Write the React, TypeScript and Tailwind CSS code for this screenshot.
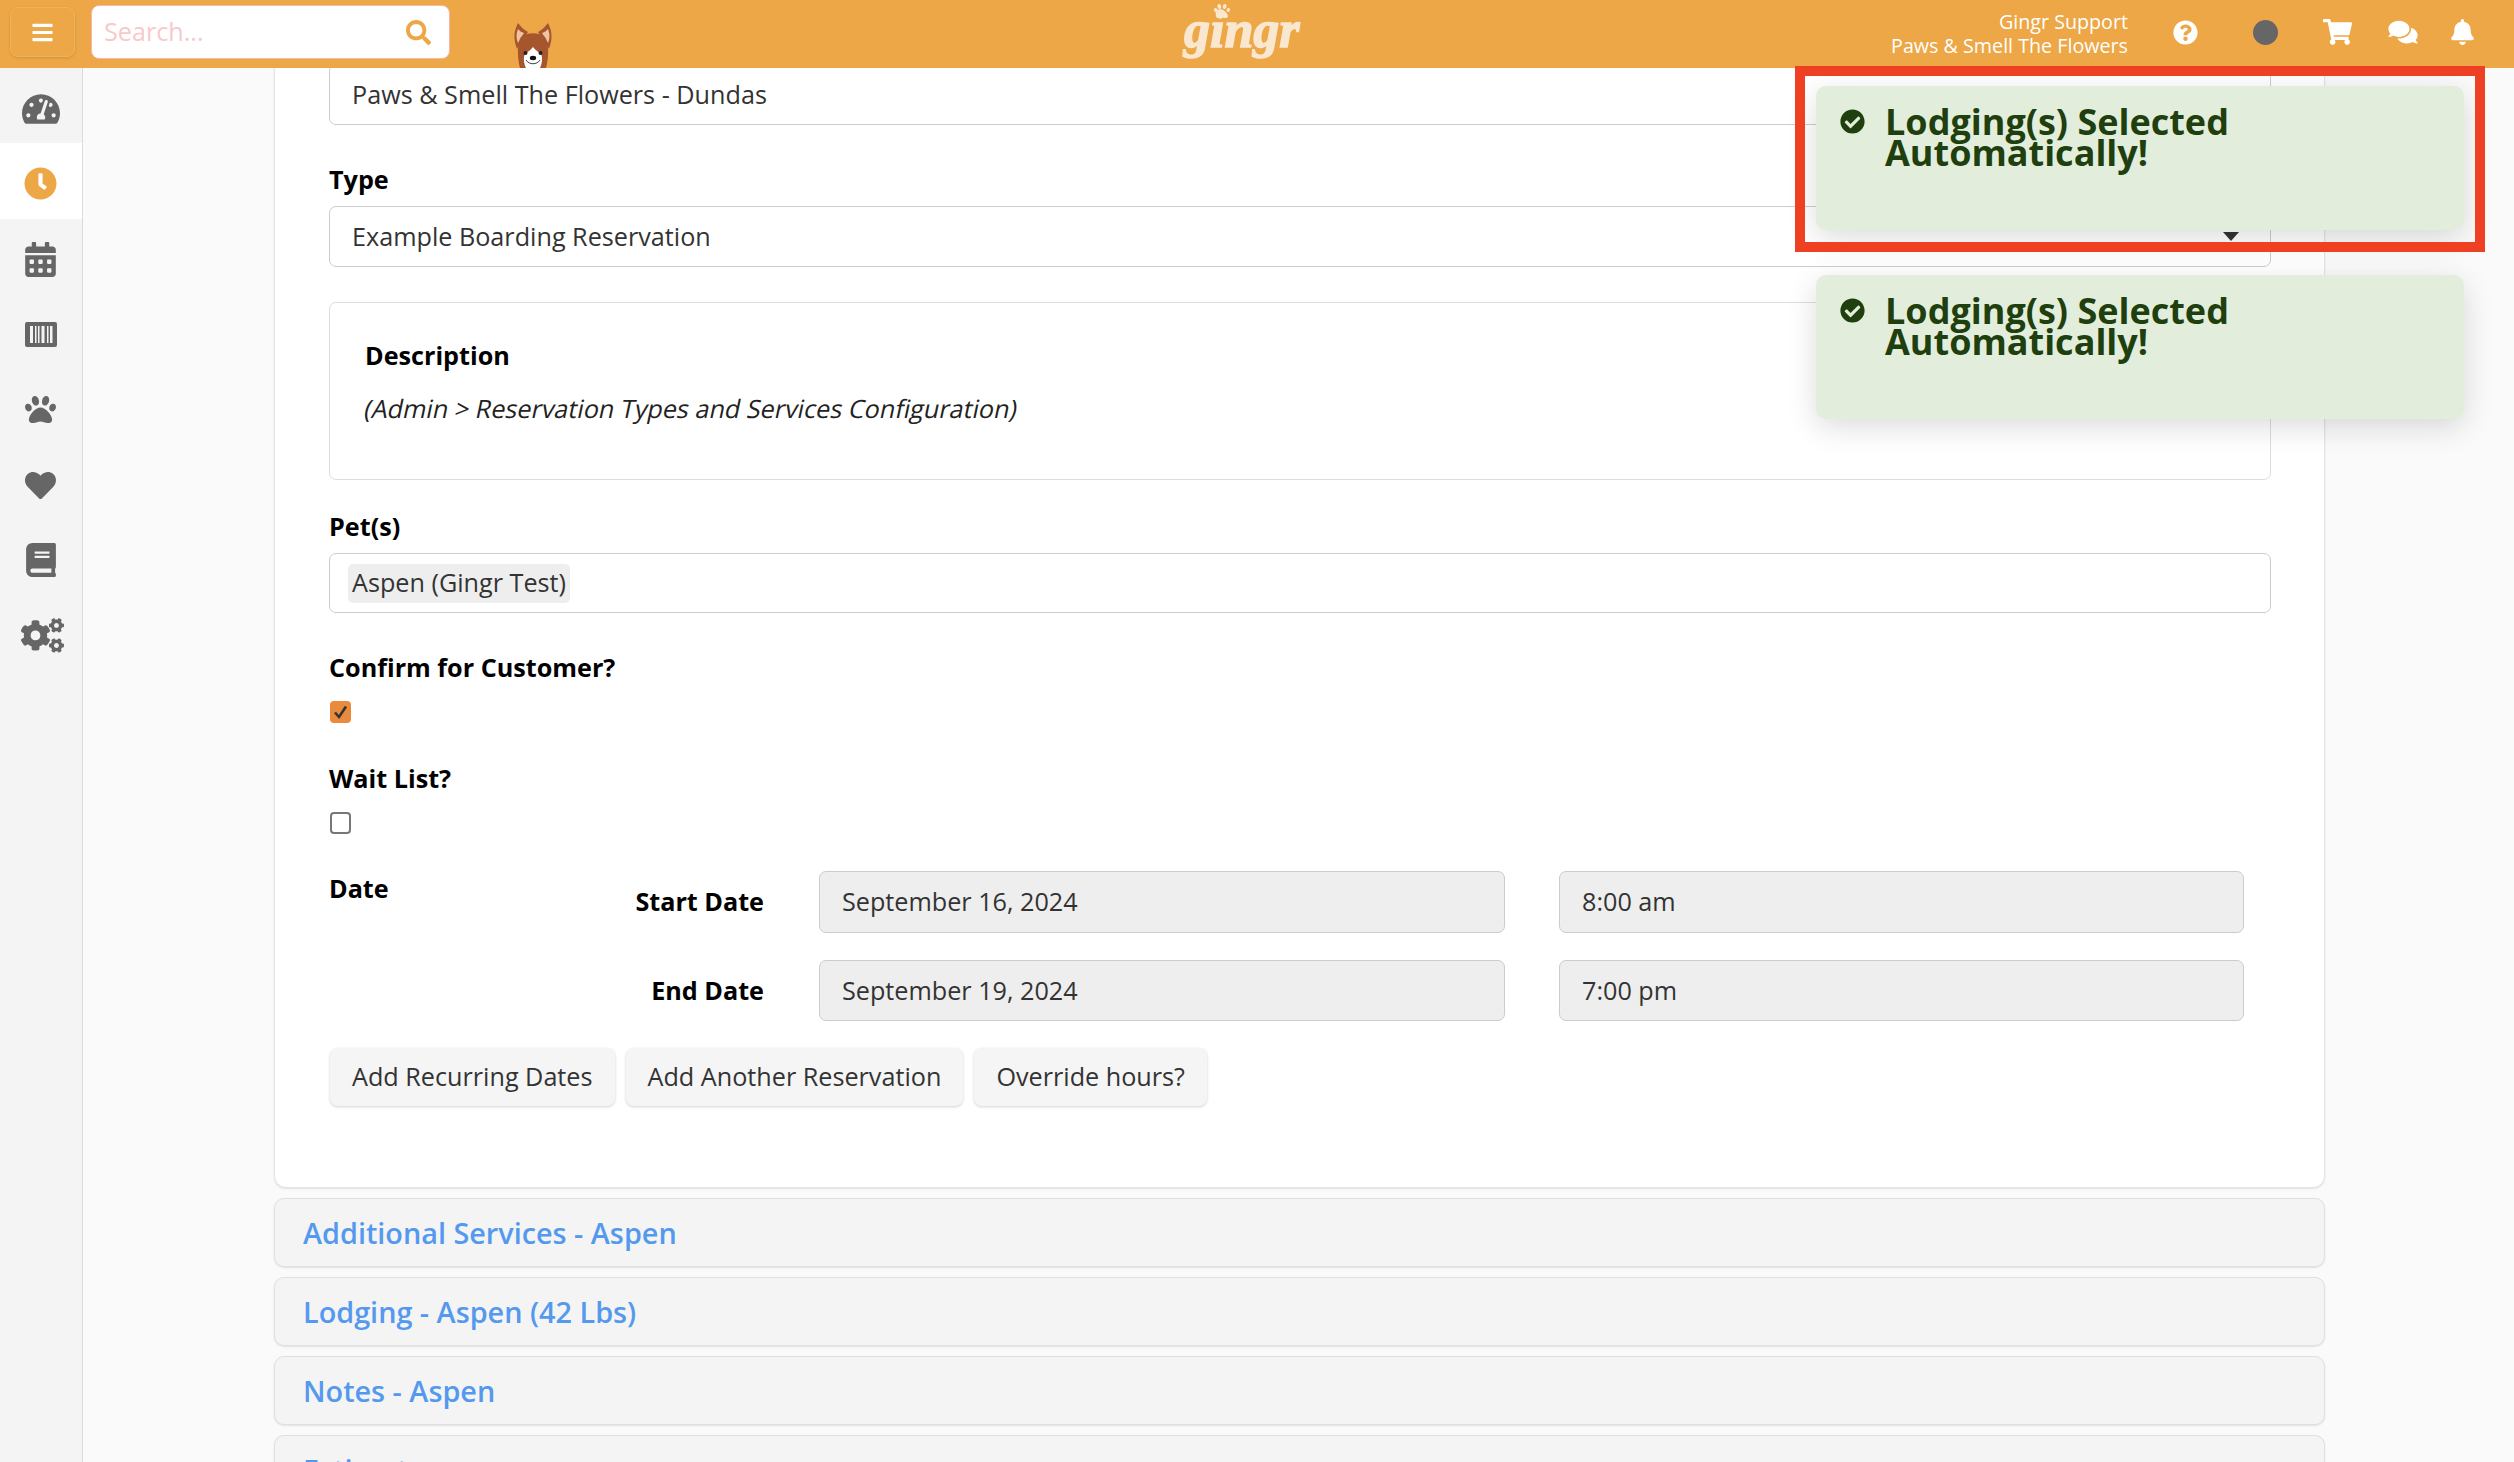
import { FaBars, FaBell, FaBook, FaCalendarAlt, FaCheckCircle, FaClock, FaCogs, FaComments, FaHeart, FaPaw, FaQuestionCircle, FaSearch, FaShoppingCart, FaTachometerAlt } from 'react-icons/fa';

function BarcodeIcon() {
  return (
    <svg viewBox="0 0 32 25" className="w-[32px] h-[25px]">
      <rect width="32" height="25" rx="2" fill="#666" />
      <path d="M5 4h3v17H5zM10 4h1.5v17H10zM13 4h1.5v17H13zM16.5 4h3v17h-3zM22 4h1.5v17H22zM25 4h2.5v17H25z" fill="#f4f4f4" />
    </svg>
  );
}

function DogHead() {
  return (
    <svg viewBox="0 0 40 45" className="w-[40px] h-[45px]">
      <path d="M5 0C1 8 0 15 4 26L15 9C11 7 8 4 5 0z" fill="#a5562d" />
      <path d="M5 6C3 11 3 15 5 20L11 10C8.500 9 6.500 8 5 6z" fill="#efc4a0" />
      <path d="M35 0C39 8 40 15 36 26L25 9C29 7 32 4 35 0z" fill="#a5562d" />
      <path d="M35 6C37 11 37 15 35 20L29 10C31.500 9 33.500 8 35 6z" fill="#efc4a0" />
      <path d="M7 45C4 34 4 20 8 14C14 9 26 9 32 14C36 20 36 34 33 45z" fill="#a5562d" />
      <path d="M20 24C17 28 14 29 12 31C10 35 11 41 13 45H27C29 41 30 35 28 31C26 29 23 28 20 24z" fill="#fff" />
      <circle cx="12.500" cy="30" r="2" fill="#222" />
      <circle cx="27.500" cy="30" r="2" fill="#222" />
      <ellipse cx="20" cy="35" rx="3.200" ry="2.200" fill="#111" />
      <path d="M13 37C16 42 24 42 27 37" fill="none" stroke="#444" strokeWidth="1" />
    </svg>
  );
}

function Toast() {
  return (
    <div className="w-[648px] h-[144px] rounded-[10px] bg-[#e2eedb] shadow-[0_8px_30px_rgba(0,0,0,0.14)] flex pl-[24px] pt-[20px] text-[#1f3f0f]">
      <FaCheckCircle className="w-[25px] h-[25px] mt-[3px] shrink-0" />
      <div className="ml-[20px] w-[420px] text-[36px] leading-[31px] font-bold">Lodging(s) Selected Automatically!</div>
    </div>
  );
}

function Field({ text, className }: { text: string; className: string }) {
  return <div className={`flex items-center px-[22px] border border-[#ccc] rounded-[7px] text-[25.2px] text-[#333] ${className}`}>{text}</div>;
}

const navItems = [
  { icon: <FaTachometerAlt className="w-[38px] h-[34px]" /> },
  { icon: <FaClock className="w-[33px] h-[33px] text-[#eda746]" />, active: true },
  { icon: <FaCalendarAlt className="w-[31px] h-[35px]" /> },
  { icon: <BarcodeIcon /> },
  { icon: <FaPaw className="w-[35px] h-[31px]" /> },
  { icon: <FaHeart className="w-[35px] h-[31px]" /> },
  { icon: <FaBook className="w-[30px] h-[34px]" /> },
  { icon: <FaCogs className="w-[43px] h-[35px] ml-[4px]" /> },
];

const sections = ['Additional Services - Aspen', 'Lodging - Aspen (42 Lbs)', 'Notes - Aspen', 'Estimate'];

export default function App() {
  return (
    <div className="relative w-[2514px] h-[1462px] overflow-hidden bg-[#fafafa] font-['Open_Sans',sans-serif]">
      <header className="h-[68px] bg-[#eda746] flex items-start text-white">
        <button className="mt-[7px] ml-[10px] w-[65px] h-[50px] rounded-[8px] border border-[#efb25c] shadow-[0_1px_3px_rgba(0,0,0,0.12)] flex items-center justify-center">
          <FaBars className="w-[23px] h-[23px]" />
        </button>
        <div className="mt-[5px] ml-[16px] w-[359px] h-[54px] bg-white rounded-[8px] border border-[#f5b7a8] flex items-center justify-between pl-[12px] pr-[18px]">
          <span className="text-[25.2px] text-[#f8c9c9]">Search...</span>
          <FaSearch className="w-[25px] h-[25px] text-[#eda746]" />
        </div>
        <div className="mt-[23px] ml-[63px]"><DogHead /></div>
        <div className="relative ml-[628px] w-[120px] h-[68px]">
          <FaPaw className="absolute left-[32px] top-[3px] w-[18px] h-[16px] text-[#f9e7cf]" />
          <span className="absolute left-[3px] top-[4px] text-[52px] leading-[52px] font-['Liberation_Serif',serif] font-bold italic text-[#f9e7cf] [-webkit-text-stroke:1.5px_#f9e7cf]">gingr</span>
        </div>
        <div className="ml-[auto] mr-[386px] mt-[10px] text-right text-[19.7px] leading-[24px]">
          <div>Gingr Support</div>
          <div>Paws &amp; Smell The Flowers</div>
        </div>
      </header>
      <div className="absolute right-[40px] top-[19px] flex items-center text-white">
        <FaQuestionCircle className="w-[25px] h-[25px] mr-[55px]" />
        <span className="w-[25px] h-[25px] rounded-full bg-[#666] mr-[45px]" />
        <FaShoppingCart className="w-[29px] h-[26px] mr-[36px]" />
        <FaComments className="w-[30px] h-[26px] mr-[33px]" />
        <FaBell className="w-[23px] h-[26px]" />
      </div>

      <div className="flex h-[1394px] overflow-hidden">
        <aside className="w-[83px] shrink-0 bg-[#f4f4f4] border-r border-[#dcdcdc] text-[#666]">
          {navItems.map((item, i) => (
            <div key={i} className={`h-[75.3px] flex items-center justify-center pt-[6px] pr-[1px] ${item.active ? 'bg-white' : ''}`}>
              {item.icon}
            </div>
          ))}
        </aside>
        <main className="flex-1 pl-[191px] pr-[189px]">
          <div className="-mt-[10px] bg-white border border-[#e4e4e4] rounded-[12px] shadow-[0_1px_2px_rgba(0,0,0,0.1)] pl-[54px] pr-[53px] pt-[5px] pb-[81px]">
            <Field text="Paws & Smell The Flowers - Dundas" className="h-[61px]" />
            <label className="block mt-[38px] mb-[10px] text-[25.2px] leading-[33px] font-bold text-black">Type</label>
            <div className="relative">
              <Field text="Example Boarding Reservation" className="h-[61px]" />
              <span className="absolute right-[32px] top-[26px] border-x-[8px] border-t-[9px] border-x-transparent border-t-[#333]" />
            </div>
            <div className="mt-[35px] h-[178px] border border-[#ddd] rounded-[7px] pl-[35px] pt-[36px]">
              <div className="text-[25.2px] leading-[33px] font-bold text-black">Description</div>
              <div className="mt-[20px] origin-left -skew-x-12 text-[25.2px] leading-[33px] text-[#222]">(Admin &gt; Reservation Types and Services Configuration)</div>
            </div>
            <label className="block mt-[30px] mb-[10px] text-[25.2px] leading-[33px] font-bold text-black">Pet(s)</label>
            <div className="h-[60px] border border-[#ccc] rounded-[7px] flex items-center px-[18px]">
              <span className="bg-[#eee] rounded-[5px] px-[4px] h-[39px] flex items-center text-[25.2px] text-[#333]">Aspen (Gingr Test)</span>
            </div>
            <label className="block mt-[38px] text-[25.2px] leading-[33px] font-bold text-black">Confirm for Customer?</label>
            <span className="block mt-[17px] ml-[1px] w-[21px] h-[22px] rounded-[4px] bg-[#ea8a3c]">
              <svg viewBox="0 0 21 22" className="w-[21px] h-[22px]"><path d="M5 11.500L9 16L16 5.500" fill="none" stroke="#333" strokeWidth="2.600" /></svg>
            </span>
            <label className="block mt-[39px] text-[25.2px] leading-[33px] font-bold text-black">Wait List?</label>
            <span className="block mt-[17px] ml-[1px] w-[21px] h-[22px] rounded-[4px] border-2 border-[#777] bg-white" />
            <div className="mt-[37px] flex">
              <div className="w-[180px] pt-[1px] text-[25.2px] leading-[33px] font-bold text-black">Date</div>
              <div className="flex flex-col gap-[27px]">
                <div className="flex items-center">
                  <div className="w-[255px] text-right text-[25.2px] font-bold text-black">Start Date</div>
                  <Field text="September 16, 2024" className="ml-[55px] w-[686px] h-[62px] bg-[#eee]" />
                  <Field text="8:00 am" className="ml-[54px] w-[685px] h-[62px] bg-[#eee]" />
                </div>
                <div className="flex items-center">
                  <div className="w-[255px] text-right text-[25.2px] font-bold text-black">End Date</div>
                  <Field text="September 19, 2024" className="ml-[55px] w-[686px] h-[61px] bg-[#eee]" />
                  <Field text="7:00 pm" className="ml-[54px] w-[685px] h-[61px] bg-[#eee]" />
                </div>
              </div>
            </div>
            <div className="mt-[27px] ml-[1px] flex gap-[11px]">
              {['Add Recurring Dates', 'Add Another Reservation', 'Override hours?'].map((b) => (
                <button key={b} className="h-[58px] px-[22px] rounded-[8px] bg-[#f5f5f5] shadow-[0_1px_3px_rgba(0,0,0,0.18)] text-[25.2px] text-[#333]">{b}</button>
              ))}
            </div>
          </div>
          {sections.map((s) => (
            <div key={s} className="mt-[10px] h-[69px] bg-[#f4f4f4] border border-[#e0e0e0] rounded-[10px] shadow-[0_1px_2px_rgba(0,0,0,0.1)] pl-[28px] flex items-center text-[28.8px] font-semibold text-[#5599ee]">{s}</div>
          ))}
        </main>
      </div>

      <div className="absolute left-[1816px] top-[86px] flex flex-col gap-[45px]">
        <Toast />
        <Toast />
      </div>
      <div className="absolute left-[1795px] top-[66px] w-[690px] h-[186px] border-[10px] border-[#ee4023]" />
    </div>
  );
}
